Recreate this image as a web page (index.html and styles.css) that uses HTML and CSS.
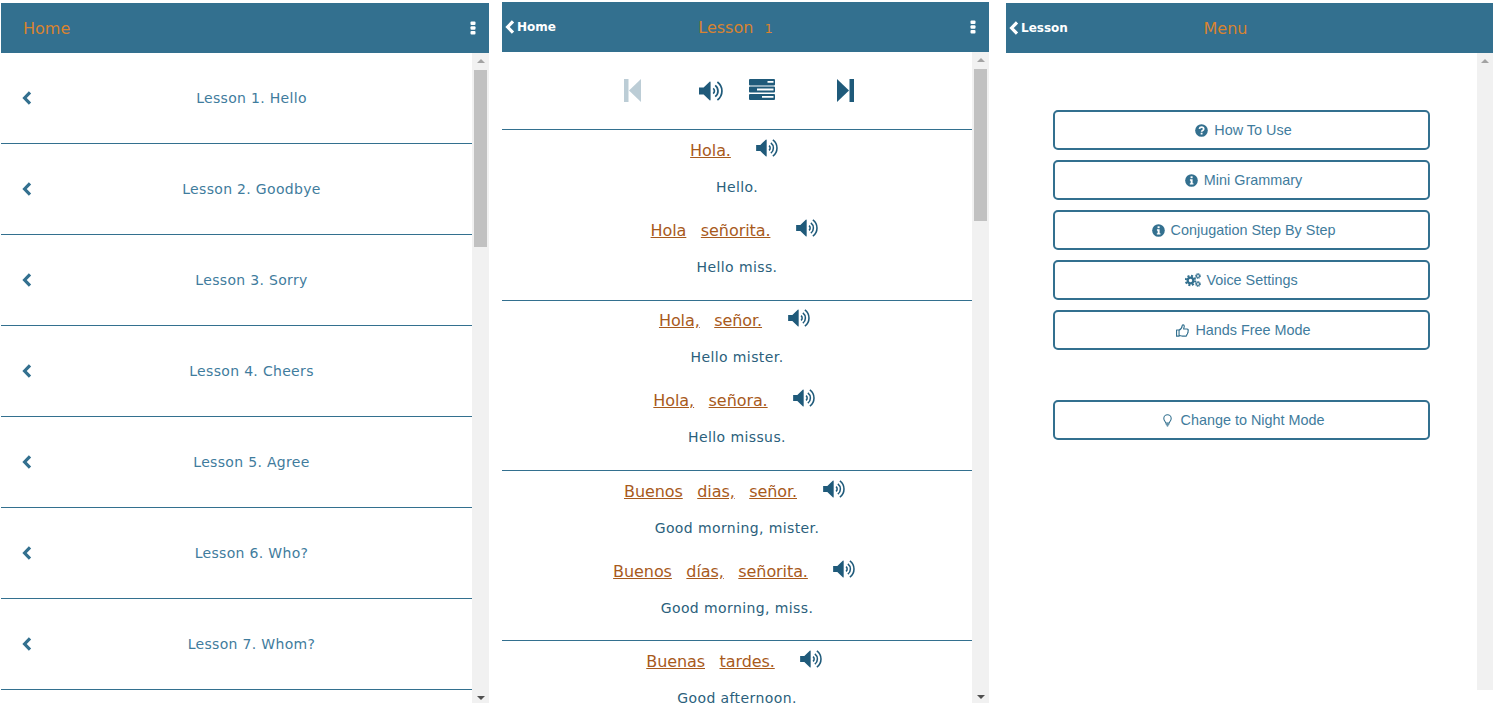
FILE: index.html
```html
<!DOCTYPE html>
<html lang="en">
<head>
<meta charset="utf-8">
<title>Lessons</title>
<link rel="stylesheet" href="styles.css">
</head>
<body>
<svg class="defs" width="0" height="0" aria-hidden="true">
  <symbol id="i-chev" viewBox="0 0 10 14"><path d="M8 1.400 2.600 7 8 12.600" fill="none" stroke="currentColor" stroke-width="3.200"/></symbol>
  <symbol id="i-dots" viewBox="0 0 6 14"><rect x="0.500" y="0.500" width="5" height="3.600" rx="1"/><rect x="0.500" y="5.200" width="5" height="3.600" rx="1"/><rect x="0.500" y="9.900" width="5" height="3.600" rx="1"/></symbol>
  <symbol id="i-vol" viewBox="0 0 25 22"><path d="M0 7.600h4.600L10.600 1.800c.5-.4 1-.2 1 .5v17.400c0 .7-.5.9-1 .5L4.600 14.400H0z"/><g fill="none" stroke="currentColor" stroke-width="1.700"><path d="M14.200 8.400a3.400 3.400 0 0 1 0 5.200"/><path d="M16.200 5.300a7.200 7.200 0 0 1 0 11.400"/><path d="M18.400 2a11.200 11.200 0 0 1 0 18"/></g></symbol>
  <symbol id="i-tasks" viewBox="0 0 26 21"><path fill-rule="evenodd" d="M1 0h24a1 1 0 0 1 1 1v4.600a1 1 0 0 1-1 1H1a1 1 0 0 1-1-1V1a1 1 0 0 1 1-1zM18.500 2v1.800h6V2zM1 7.500h24a1 1 0 0 1 1 1v4a1 1 0 0 1-1 1H1a1 1 0 0 1-1-1v-4a1 1 0 0 1 1-1zM8 9.600v1.800h16.500V9.600zM1 15h24a1 1 0 0 1 1 1v4a1 1 0 0 1-1 1H1a1 1 0 0 1-1-1v-4a1 1 0 0 1 1-1zM13 17v1.800h11.500V17z"/></symbol>
  <symbol id="i-prev" viewBox="0 0 17 23"><rect x="0" y="0" width="4.500" height="23"/><path d="M17 0v23L5 11.500z"/></symbol>
  <symbol id="i-next" viewBox="0 0 17 23"><rect x="12.500" y="0" width="4.500" height="23"/><path d="M0 0v23L12 11.500z"/></symbol>
  <symbol id="i-q" viewBox="0 0 14 14"><circle cx="7" cy="7" r="6.800"/><path d="M4.700 5.300C5 3.900 6 3.400 7.100 3.400c1.300 0 2.300.8 2.300 1.900 0 1.700-2.300 1.700-2.300 3.100" fill="none" stroke="#fff" stroke-width="1.800"/><rect x="6.100" y="9.400" width="2" height="1.900" fill="#fff"/></symbol>
  <symbol id="i-info" viewBox="0 0 14 14"><circle cx="7" cy="7" r="6.800"/><rect x="6" y="2.500" width="2.200" height="2" fill="#fff"/><path d="M5.300 5.700h2.900v4.200h.9v1.500H5.200V9.900h.9V7.200h-.8z" fill="#fff"/></symbol>
  <symbol id="i-cogs" viewBox="0 0 16 14"><g fill="none" stroke="currentColor"><circle cx="5.500" cy="7.500" r="2.800" stroke-width="2.200"/><circle cx="5.500" cy="7.500" r="4.700" stroke-width="2" stroke-dasharray="2 1.690"/><circle cx="13" cy="3" r="1.500" stroke-width="1.200"/><circle cx="13" cy="3" r="2.500" stroke-width="1" stroke-dasharray="1.200 .760"/><circle cx="13" cy="11" r="1.500" stroke-width="1.200"/><circle cx="13" cy="11" r="2.500" stroke-width="1" stroke-dasharray="1.200 .760"/></g></symbol>
  <symbol id="i-thumb" viewBox="0 0 14 14"><g fill="none" stroke="currentColor" stroke-width="1.200" stroke-linejoin="round"><path d="M.6 6.400h2.700v6.700H.6z"/><path d="M3.300 6.600C5 5.800 6.500 3.800 6.700 1.700c.1-1.100 2-1 2.200.6.100 1-.5 2.300-.8 3.100h3.700c1.500 0 1.700 1.500 1 2.100.5.800.3 1.700-.4 2.100.2.900-.1 1.600-.8 1.800.1 1.100-.5 1.700-1.500 1.700H7c-1.300 0-2.300-.6-3.700-.8"/></g></symbol>
  <symbol id="i-bulb" viewBox="0 0 10 14"><path d="M3 9.700C2.700 8 .9 7.200.9 4.800.9 2.500 2.800.7 5 .7s4.100 1.800 4.100 4.100c0 2.400-1.800 3.200-2.100 4.900z" fill="none" stroke="currentColor" stroke-width="1.200"/><path d="M3 10.400h4v1.300H3zM3.600 12.200h2.800L5.600 13.800H4.400z"/></symbol>
</svg>

<main class="app">
  <section class="panel panel-home">
    <header class="bar">
      <h1 class="title title-home">Home</h1>
      <svg class="dots"><use href="#i-dots"/></svg>
    </header>
    <div class="pane">
      <ul class="lessons">
        <li class="lesson"><svg class="chev"><use href="#i-chev"/></svg><span>Lesson 1. Hello</span></li>
        <li class="lesson"><svg class="chev"><use href="#i-chev"/></svg><span>Lesson 2. Goodbye</span></li>
        <li class="lesson"><svg class="chev"><use href="#i-chev"/></svg><span>Lesson 3. Sorry</span></li>
        <li class="lesson"><svg class="chev"><use href="#i-chev"/></svg><span>Lesson 4. Cheers</span></li>
        <li class="lesson"><svg class="chev"><use href="#i-chev"/></svg><span>Lesson 5. Agree</span></li>
        <li class="lesson"><svg class="chev"><use href="#i-chev"/></svg><span>Lesson 6. Who?</span></li>
        <li class="lesson"><svg class="chev"><use href="#i-chev"/></svg><span>Lesson 7. Whom?</span></li>
      </ul>
      <div class="scroll"><i class="arrow up"></i><i class="thumb thumb-home"></i><i class="arrow down"></i></div>
    </div>
  </section>

  <section class="panel panel-lesson">
    <header class="bar">
      <a class="back"><svg class="back-chev"><use href="#i-chev"/></svg>Home</a>
      <h1 class="title title-center title-lesson">Lesson <small class="num">1</small></h1>
      <svg class="dots"><use href="#i-dots"/></svg>
    </header>
    <div class="pane">
      <div class="content">
        <div class="toolbar">
          <svg class="tool tool-prev"><use href="#i-prev"/></svg>
          <svg class="tool tool-vol"><use href="#i-vol"/></svg>
          <svg class="tool tool-tasks"><use href="#i-tasks"/></svg>
          <svg class="tool tool-next"><use href="#i-next"/></svg>
        </div>
        <article class="group group-first">
          <p class="say"><a>Hola.</a><svg class="vol"><use href="#i-vol"/></svg></p>
          <p class="trans">Hello.</p>
          <p class="say"><a>Hola</a><a>señorita.</a><svg class="vol"><use href="#i-vol"/></svg></p>
          <p class="trans">Hello miss.</p>
        </article>
        <article class="group group-second">
          <p class="say"><a>Hola,</a><a>señor.</a><svg class="vol"><use href="#i-vol"/></svg></p>
          <p class="trans">Hello mister.</p>
          <p class="say"><a>Hola,</a><a>señora.</a><svg class="vol"><use href="#i-vol"/></svg></p>
          <p class="trans">Hello missus.</p>
        </article>
        <article class="group">
          <p class="say"><a>Buenos</a><a>dias,</a><a>señor.</a><svg class="vol"><use href="#i-vol"/></svg></p>
          <p class="trans">Good morning, mister.</p>
          <p class="say"><a>Buenos</a><a>días,</a><a>señorita.</a><svg class="vol"><use href="#i-vol"/></svg></p>
          <p class="trans">Good morning, miss.</p>
        </article>
        <article class="group">
          <p class="say"><a>Buenas</a><a>tardes.</a><svg class="vol"><use href="#i-vol"/></svg></p>
          <p class="trans">Good afternoon.</p>
        </article>
      </div>
      <div class="scroll"><i class="arrow up"></i><i class="thumb thumb-lesson"></i><i class="arrow down"></i></div>
    </div>
  </section>

  <section class="panel panel-menu">
    <header class="bar">
      <a class="back"><svg class="back-chev"><use href="#i-chev"/></svg>Lesson</a>
      <h1 class="title title-center title-menu">Menu</h1>
    </header>
    <div class="pane pane-menu">
      <nav class="menu">
        <a class="btn"><svg class="ico ico-14"><use href="#i-q"/></svg><span class="gap">How To Use</span></a>
        <a class="btn"><svg class="ico ico-14"><use href="#i-info"/></svg><span class="gap">Mini Grammary</span></a>
        <a class="btn"><svg class="ico ico-14"><use href="#i-info"/></svg><span class="gap">Conjugation Step By Step</span></a>
        <a class="btn"><svg class="ico ico-16"><use href="#i-cogs"/></svg><span class="gap-s">Voice Settings</span></a>
        <a class="btn"><svg class="ico ico-14"><use href="#i-thumb"/></svg><span class="gap">Hands Free Mode</span></a>
        <a class="btn btn-night"><svg class="ico ico-10"><use href="#i-bulb"/></svg><span class="gap gap-night">Change to Night Mode</span></a>
      </nav>
      <div class="scroll scroll-menu"><i class="arrow up"></i></div>
    </div>
  </section>
</main>
</body>
</html>
```

FILE: styles.css
```css
* { box-sizing: border-box; }
html, body { margin: 0; height: 703px; overflow: hidden; background: #fff; }
body { font-family: "DejaVu Sans", Verdana, sans-serif; color: #33708f; }
.defs { position: absolute; }
svg { fill: currentColor; display: block; flex: none; }
h1, p, ul { margin: 0; padding: 0; }
ul { list-style: none; }

.app { display: flex; align-items: flex-start; height: 703px; padding-left: 1px; }
.panel { flex: none; width: 487px; height: 703px; display: flex; flex-direction: column; overflow: hidden; }
.panel-home { width: 488px; margin: 3px 13px 0 0; }
.panel-lesson { margin: 2px 17px 0 0; }
.panel-menu { margin-top: 3px; height: 687px; }

.bar { flex: none; height: 50px; background: #33708f; display: flex; align-items: center; position: relative; color: #fff; }
.title { font-size: 16px; font-weight: 400; color: #d98330; }
.title-home { padding-left: 22px; }
.title-center { position: absolute; left: 0; text-align: center; }
.title-lesson { right: 20px; }
.title-menu { right: 48px; }
.num { font-size: 13px; margin-left: 6px; }
.dots { position: absolute; right: 13px; top: 18px; width: 6px; height: 14px; }
.back { display: flex; align-items: center; padding-left: 3px; font-size: 12px; font-weight: 700; }
.back-chev { width: 10px; height: 14px; margin-right: 2px; }

.pane { flex: 1; min-height: 0; display: flex; overflow: hidden; }
.scroll { flex: none; width: 17px; background: #f1f1f1; display: flex; flex-direction: column; align-items: center; position: relative; }
.scroll-menu { width: 16px; }
.arrow { flex: none; width: 0; height: 0; border-left: 4px solid transparent; border-right: 4px solid transparent; }
.arrow.up { border-bottom: 4px solid #a3a3a3; margin-top: 6px; }
.arrow.down { border-top: 4px solid #505050; position: absolute; bottom: 6px; }
.thumb { flex: none; width: 13px; background: #c1c1c1; margin-top: 7px; }
.thumb-home { height: 177px; }
.thumb-lesson { height: 152px; }

.lessons { flex: 1; min-width: 0; }
.lesson { height: 91px; border-bottom: 1px solid #33708f; display: flex; align-items: center; justify-content: center; position: relative; font-size: 14px; letter-spacing: 0.320px; padding: 0 0 1px 30px; color: #3f7c9d; }
.chev { position: absolute; left: 21px; top: 38px; width: 10px; height: 14px; color: #33708f; }

.content { flex: 1; min-width: 0; }
.toolbar { height: 78px; border-bottom: 1px solid #33708f; display: flex; align-items: center; color: #1f5a7a; position: relative; }
.tool { position: absolute; }
.tool-prev { left: 122px; top: 27px; width: 17px; height: 23px; color: #bccdd6; }
.tool-vol { left: 197px; top: 28px; width: 25px; height: 22px; }
.tool-tasks { left: 247px; top: 27px; width: 26px; height: 21px; }
.tool-next { left: 335px; top: 27px; width: 17px; height: 23px; }

.group { border-bottom: 1px solid #33708f; height: 170px; text-align: center; }
.group-first { height: 171px; }
.group-second { height: 171px; margin-top: -1px; }
.say { height: 40px; display: flex; justify-content: center; align-items: center; gap: 14.500px; font-size: 16px; letter-spacing: -0.080px; padding-right: 4.500px; }
.say a { color: #a85a1c; text-decoration: underline; }
.vol { width: 23px; height: 20px; color: #1f5a7a; margin: -5px 0 0 11px; }
.trans { height: 40px; margin-top: -3px; margin-bottom: 3px; line-height: 40px; font-size: 14px; letter-spacing: 0.400px; color: #2b5f7c; }

.pane-menu { height: 637px; }
.menu { flex: 1; padding-top: 57px; display: flex; flex-direction: column; align-items: center; gap: 10px; }
.btn { width: 377px; height: 40px; flex: none; border: 2px solid #33708f; border-radius: 5px; padding-left: 4px; display: flex; align-items: center; justify-content: center; font: 14.400px "Liberation Sans", Arial, sans-serif; color: #3f7c9d; }
.btn svg { color: #33708f; }
.btn-night { margin-top: 40px; }
.ico-14 { width: 13px; height: 13px; }
.ico-16 { width: 16px; height: 14px; }
.ico-10 { width: 9px; height: 13px; }
.gap { margin-left: 6px; }
.gap-s { margin: 0 4px 0 5px; }
.gap-night { margin-left: 9px; }
```
